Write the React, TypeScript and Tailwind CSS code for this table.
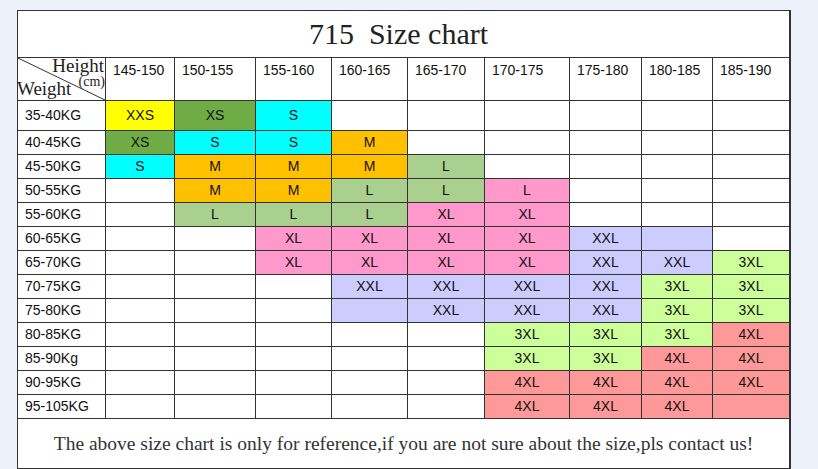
const heights = ["145-150", "150-155", "155-160", "160-165", "165-170", "170-175", "175-180", "180-185", "185-190"];

const fills: Record<string, string> = {
  y: "bg-[#ffff00]",
  g: "bg-[#6fac46]",
  c: "bg-[#00ffff]",
  o: "bg-[#ffc000]",
  l: "bg-[#a9d08e]",
  p: "bg-[#ff99cc]",
  v: "bg-[#ccccff]",
  m: "bg-[#ccff99]",
  r: "bg-[#ff9999]",
};

const rows: [string, string[]][] = [
  ["35-40KG", ["y:XXS", "g:XS", "c:S", "", "", "", "", "", ""]],
  ["40-45KG", ["g:XS", "c:S", "c:S", "o:M", "", "", "", "", ""]],
  ["45-50KG", ["c:S", "o:M", "o:M", "o:M", "l:L", "", "", "", ""]],
  ["50-55KG", ["", "o:M", "o:M", "l:L", "l:L", "p:L", "", "", ""]],
  ["55-60KG", ["", "l:L", "l:L", "l:L", "p:XL", "p:XL", "", "", ""]],
  ["60-65KG", ["", "", "p:XL", "p:XL", "p:XL", "p:XL", "v:XXL", "v:", ""]],
  ["65-70KG", ["", "", "p:XL", "p:XL", "p:XL", "p:XL", "v:XXL", "v:XXL", "m:3XL"]],
  ["70-75KG", ["", "", "", "v:XXL", "v:XXL", "v:XXL", "v:XXL", "m:3XL", "m:3XL"]],
  ["75-80KG", ["", "", "", "v:", "v:XXL", "v:XXL", "v:XXL", "m:3XL", "m:3XL"]],
  ["80-85KG", ["", "", "", "", "", "m:3XL", "m:3XL", "m:3XL", "r:4XL"]],
  ["85-90Kg", ["", "", "", "", "", "m:3XL", "m:3XL", "r:4XL", "r:4XL"]],
  ["90-95KG", ["", "", "", "", "", "r:4XL", "r:4XL", "r:4XL", "r:4XL"]],
  ["95-105KG", ["", "", "", "", "", "r:4XL", "r:4XL", "r:4XL", "r:"]],
];

const gridCols = "grid grid-cols-[88px_69px_81px_76px_76px_77px_85px_72px_71px_76px]";

function Corner() {
  return (
    <div className="relative border-r border-b border-[#333] font-['Liberation_Serif',serif] text-[#222]">
      <svg className="absolute inset-0 h-full w-full" preserveAspectRatio="none" viewBox="0 0 100 100">
        <line x1="0" y1="0" x2="100" y2="100" stroke="#333" strokeWidth="1" vectorEffect="non-scaling-stroke" />
      </svg>
      <span className="absolute right-[1px] top-[-1px] text-[19px] leading-[17px]">Height</span>
      <span className="absolute right-[0px] top-[17px] text-[14px] leading-[14px]">(cm)</span>
      <span className="absolute left-[-1px] top-[21px] text-[19px] leading-none">Weight</span>
    </div>
  );
}

export default function App() {
  return (
    <div className="h-[469px] w-full bg-[#edf1f9] pl-[17px] pt-[10px]">
      <div className="w-[774px] border border-r-2 border-[#333] bg-white text-[#111] font-['Liberation_Sans',Arial,sans-serif] text-[14px]">
        <div className="flex h-[47px] items-center justify-center border-b border-[#333] pr-[10px] font-['Liberation_Serif',serif] text-[30px] leading-[30px] text-[#222]">
          715&nbsp; Size chart
        </div>

        <div className={`${gridCols} h-[43px]`}>
          <Corner />
          {heights.map((h, i) => (
            <div
              key={h}
              className={`border-b border-[#333] pl-[7px] pt-[2px] leading-[20px] ${i < heights.length - 1 ? "border-r" : ""}`}
            >
              {h}
            </div>
          ))}
        </div>

        {rows.map(([label, cells], r) => (
          <div key={label} className={`${gridCols} ${r === 0 ? "h-[30px]" : "h-[24px]"}`}>
            <div className="flex items-center border-r border-b border-[#333] pl-[7px]">{label}</div>
            {cells.map((cell, i) => {
              const [k, text] = cell ? cell.split(":") : ["", ""];
              return (
                <div
                  key={i}
                  className={`flex items-center justify-center border-b border-[#333] ${i < cells.length - 1 ? "border-r" : ""} ${k ? fills[k] : ""}`}
                >
                  {text}
                </div>
              );
            })}
          </div>
        ))}

        <div className="flex h-[49px] items-center justify-center pt-[1px] font-['Liberation_Serif',serif] text-[19.5px] leading-[24px] text-[#333]">
          The above size chart is only for reference,if you are not sure about the size,pls contact us!
        </div>
      </div>
    </div>
  );
}
